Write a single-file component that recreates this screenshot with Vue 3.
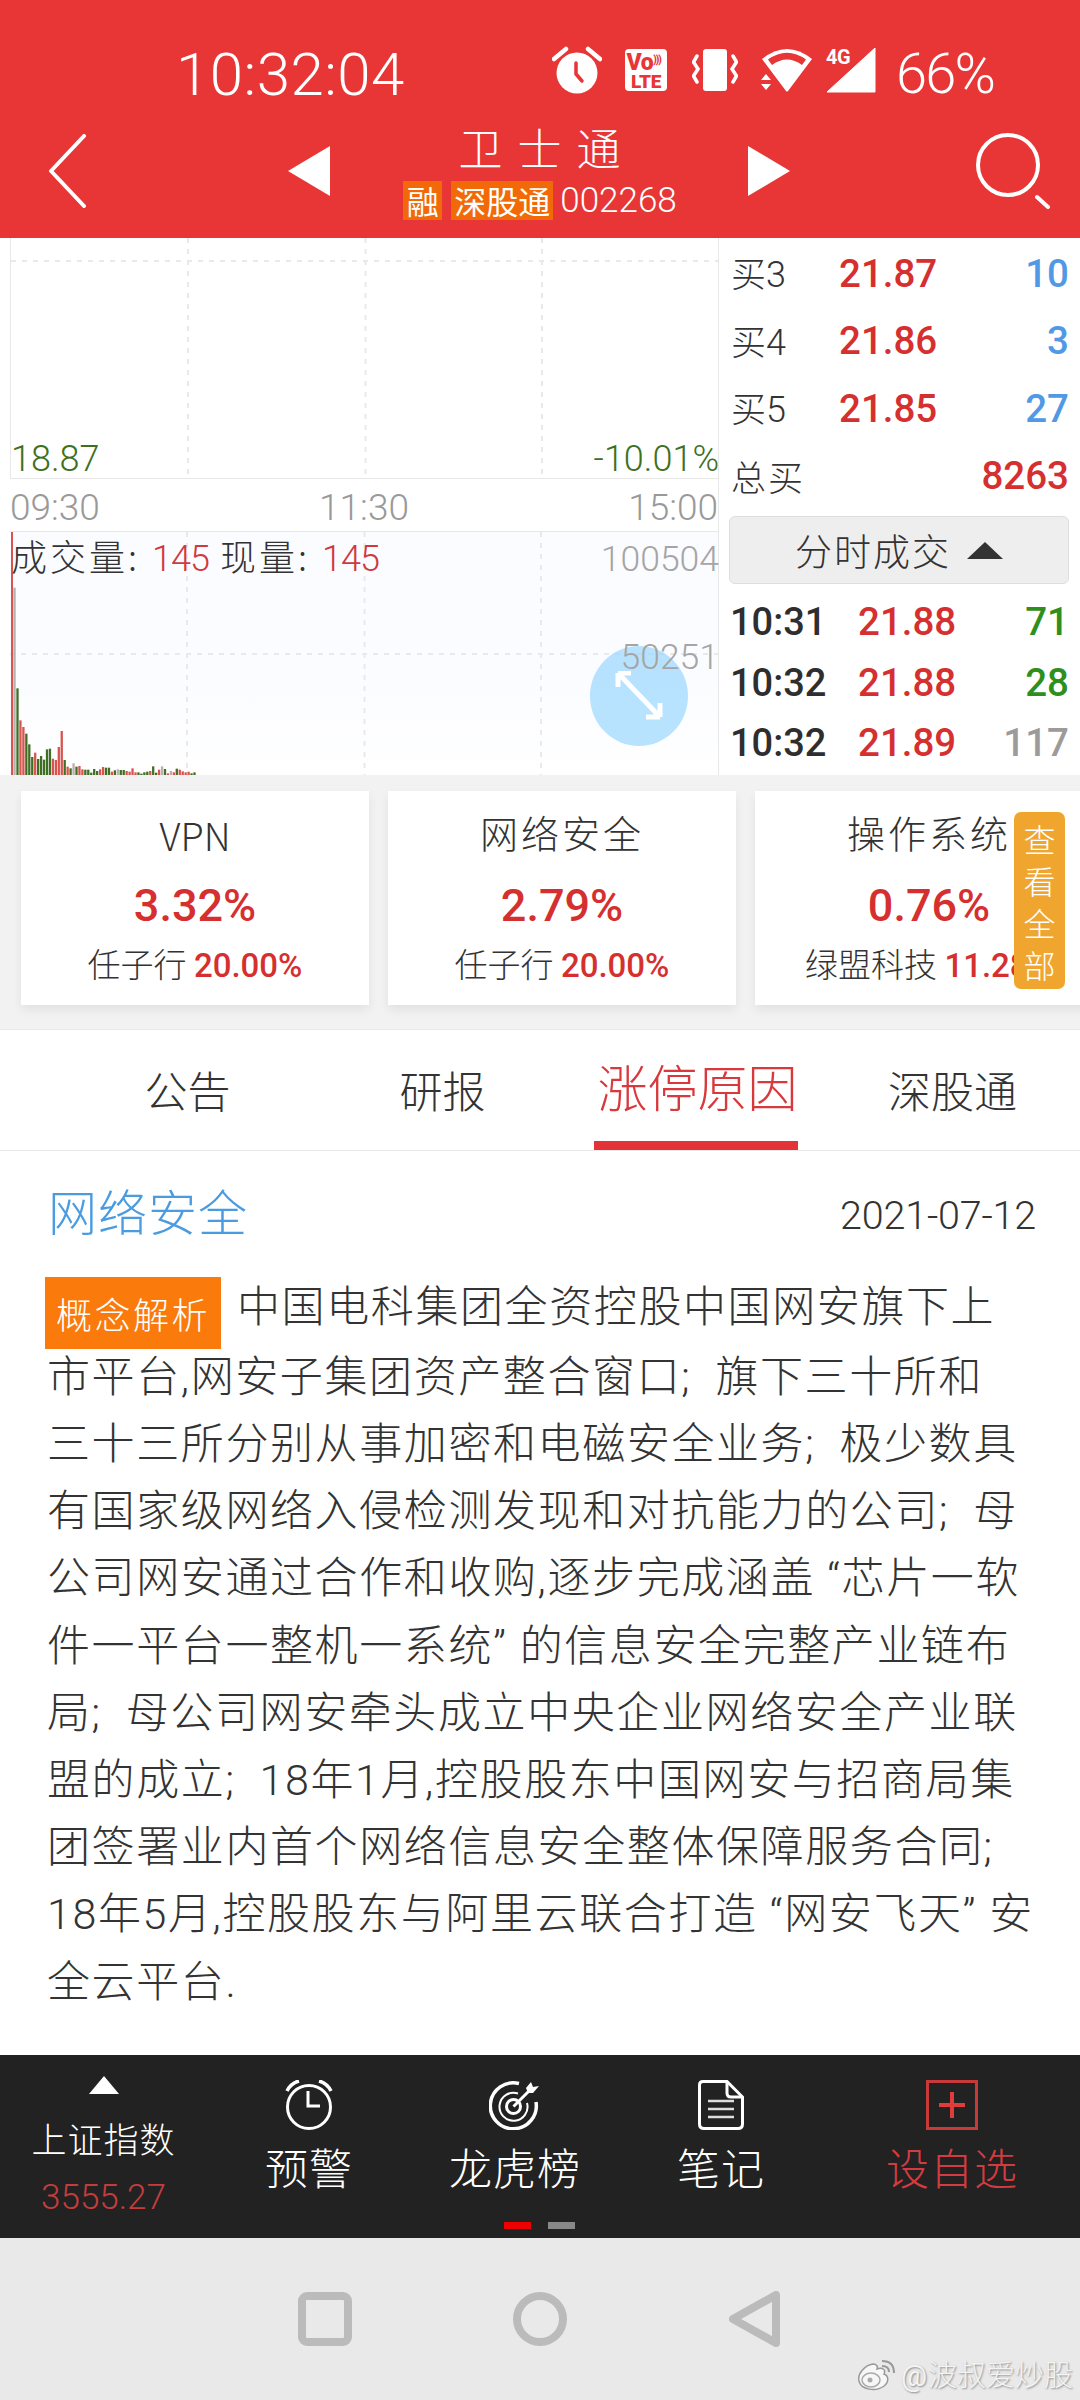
<script setup>
const tops = [170,472,568,588,608,640,678,665,684,675,686,655,653,683,687,648,600,687,707,712,697,707,705,715,716,716,725,714,720,715,708,710,710,722,718,715,717,717,720,722,712,724,724,728,724,722,720,706,725,716,706,714,727,720,724,713,716,721,724,722,727,724]
const kinds = 'xgrrgggrgggggrrrrgrgxgrrgggggrrggrgxggrrrrggggrggrxgrxrgrrrrgggx'
const colors = { g: '#3f6f25', r: '#d9544f', x: '#b6b0b0' }
const bars = tops.map((t, i) => ({
  x: 13.4 + i * 2.95,
  h: (735 - t) / 3,
  c: colors[kinds[i]] || '#3f6f25'
}))
const asks = [
  { l: '买', n: '3', p: '21.87', q: '10' },
  { l: '买', n: '4', p: '21.86', q: '3' },
  { l: '买', n: '5', p: '21.85', q: '27' }
]
const trades = [
  { t: '10:31', p: '21.88', q: '71', c: 'green' },
  { t: '10:32', p: '21.88', q: '28', c: 'green' },
  { t: '10:32', p: '21.89', q: '117', c: 'gray' }
]
const cards = [
  { t: 'VPN', p: '3.32%', s: '任子行', v: '20.00%', latin: true },
  { t: '网络安全', p: '2.79%', s: '任子行', v: '20.00%' },
  { t: '操作系统', p: '0.76%', s: '绿盟科技', v: '11.28%' }
]
const lines = [
  '市平台,网安子集团资产整合窗口;  旗下三十所和',
  '三十三所分别从事加密和电磁安全业务;  极少数具',
  '有国家级网络入侵检测发现和对抗能力的公司;  母',
  '公司网安通过合作和收购,逐步完成涵盖 “芯片一软',
  '件一平台一整机一系统” 的信息安全完整产业链布',
  '局;  母公司网安牵头成立中央企业网络安全产业联',
  '盟的成立;  18年1月,控股股东中国网安与招商局集',
  '团签署业内首个网络信息安全整体保障服务合同;',
  '18年5月,控股股东与阿里云联合打造 “网安飞天” 安',
  '全云平台.'
]
</script>

<template>
  <div class="page">
    <header class="head">
      <div class="status">
        <span class="clock">10:32:04</span>
        <div class="status-icons">
          <svg class="si" width="50" height="48" viewBox="0 0 50 48">
            <circle cx="25" cy="27" r="20.5" fill="#fff"/>
            <path d="M2 13 14 3M48 13 36 3" stroke="#fff" stroke-width="4.5" stroke-linecap="round"/>
            <path d="M24 17v11l6 7" fill="none" stroke="#e83535" stroke-width="3.5" stroke-linecap="round"/>
          </svg>
          <div class="volte"><span class="vo">Vo<i>)))</i></span><span class="lte">LTE</span></div>
          <svg class="si" width="46" height="42" viewBox="0 0 46 42">
            <rect x="11" y="0" width="24" height="42" rx="3" fill="#fff"/>
            <path d="M5 7 1.500 13 6 20 1.500 27 5 33M41 7 44.500 13 40 20 44.500 27 41 33" fill="none" stroke="#fff" stroke-width="3.500" stroke-linecap="round"/>
          </svg>
          <svg class="si wifi" width="52" height="46" viewBox="0 0 52 46">
            <path d="M1 12Q26-8 51 12L27 44Q26 45 25 44Z" fill="#fff"/>
            <path d="M7 12.500Q26-1 45 12.500L41 18Q26 7 11 18Z" fill="#e83535"/>
            <path d="M0 33 5 27 10 33ZM0 37 5 43 10 37Z" fill="#fff"/>
          </svg>
          <div class="signal">
            <span class="g4">4G</span>
            <svg width="50" height="46" viewBox="0 0 50 46"><path d="M49 1V45H1Z" fill="#fff" stroke="#fff" stroke-width="1" stroke-linejoin="round"/></svg>
          </div>
          <span class="batt">66%</span>
        </div>
      </div>
      <div class="nav">
        <svg class="back" width="40" height="74" viewBox="0 0 40 74"><path d="M36 2 3 37 36 72" fill="none" stroke="#fff" stroke-width="4" stroke-linecap="round" stroke-linejoin="round"/></svg>
        <svg class="tri-l" width="44" height="50" viewBox="0 0 44 50"><path d="M43 0V50L1 25Z" fill="#fff"/></svg>
        <div class="title-box">
          <div class="stock">卫士通</div>
          <div class="tags"><span class="tag one">融</span><span class="tag">深股通</span><span class="code">002268</span></div>
        </div>
        <svg class="tri-r" width="44" height="50" viewBox="0 0 44 50"><path d="M1 0V50L43 25Z" fill="#fff"/></svg>
        <svg class="search" width="76" height="76" viewBox="0 0 76 76">
          <circle cx="33" cy="32" r="30" fill="none" stroke="#fff" stroke-width="4"/>
          <path d="M62 64 73 74" stroke="#fff" stroke-width="4" stroke-linecap="round"/>
        </svg>
      </div>
    </header>

    <section class="quote">
      <div class="chart">
        <div class="plot-top">
          <svg class="grid" width="708" height="239" viewBox="0 0 708 239">
            <path d="M177 0V239M354.500 0V239M531 0V239" stroke="#e9e9e9" stroke-width="2" stroke-dasharray="5 6"/>
            <path d="M0 23H708" stroke="#e9e9e9" stroke-width="2" stroke-dasharray="5 6"/>
          </svg>
          <span class="low">18.87</span><span class="low">-10.01%</span>
        </div>
        <div class="times"><span>09:30</span><span>11:30</span><span>15:00</span></div>
        <div class="plot-vol">
          <svg class="grid" width="710" height="244" viewBox="0 0 710 244">
            <path d="M177 0V244M354.500 0V244M531 0V244" stroke="#e9e9e9" stroke-width="2" stroke-dasharray="5 6"/>
            <path d="M0 122H710" stroke="#e9e9e9" stroke-width="2" stroke-dasharray="5 6"/>
            <rect x="1" y="0" width="2" height="244" fill="#d9544f"/>
            <rect v-for="(b, i) in bars" :key="i" :x="b.x - 10" :y="244 - b.h" width="2.300" :height="b.h" :fill="b.c"/>
          </svg>
          <div class="vol-head">
            <span class="vol-text"><b>成交量:</b><em>145</em><b class="b2">现量:</b><em>145</em></span>
            <span class="vol-max">100504</span>
          </div>
          <div class="expand">
            <svg width="50" height="50" viewBox="0 0 50 50">
              <path d="M4 2 46 46M4 2H17M4 2V16M46 46H32M46 46V32" fill="none" stroke="#fff" stroke-width="5"/>
            </svg>
          </div>
          <span class="vol-mid">50251</span>
        </div>
      </div>
      <aside class="book">
        <div v-for="a in asks" :key="a.n" class="row">
          <span class="lab">{{ a.l }}<span class="lab-n">{{ a.n }}</span></span>
          <span class="price">{{ a.p }}</span>
          <span class="qty blue">{{ a.q }}</span>
        </div>
        <div class="row">
          <span class="lab total">总买</span>
          <span class="qty red">8263</span>
        </div>
        <div class="fold">分时成交<i class="fold-tri"></i></div>
        <div v-for="(t, i) in trades" :key="i" class="trade">
          <span class="t-time">{{ t.t }}</span>
          <span class="t-price">{{ t.p }}</span>
          <span class="qty" :class="t.c">{{ t.q }}</span>
        </div>
      </aside>
    </section>

    <section class="cards">
      <div class="card-row">
        <div v-for="c in cards" :key="c.t" class="card">
          <div class="c-title" :class="{ latin: c.latin }">{{ c.t }}</div>
          <div class="c-pct">{{ c.p }}</div>
          <div class="c-sub">{{ c.s }} <em>{{ c.v }}</em></div>
        </div>
      </div>
      <div class="all">查看全部</div>
    </section>

    <nav class="tabs">
      <span class="tab">公告</span>
      <span class="tab">研报</span>
      <span class="tab on">涨停原因</span>
      <span class="tab">深股通</span>
    </nav>

    <article class="article">
      <div class="a-head"><span class="a-title">网络安全</span><span class="a-date">2021-07-12</span></div>
      <div class="a-first"><span class="a-tag">概念解析</span><span class="a-line">中国电科集团全资控股中国网安旗下上</span></div>
      <div v-for="l in lines" :key="l" class="a-line">{{ l }}</div>
    </article>

    <div class="spacer"></div>

    <footer class="bar">
      <div class="index">
        <i class="idx-tri"></i>
        <span class="idx-name">上证指数</span>
        <span class="idx-val">3555.27</span>
      </div>
      <div class="act a1">
        <svg width="50" height="50" viewBox="0 0 50 50" fill="none" stroke="#fff" stroke-width="3">
          <circle cx="25" cy="27" r="21.500"/>
          <path d="M24 11V26H36"/>
          <path d="M3 11Q7 3 15 1M47 11Q43 3 35 1" stroke-width="3.500"/>
        </svg>
        <span>预警</span>
      </div>
      <div class="act a2">
        <svg width="52" height="50" viewBox="0 0 52 50" fill="none" stroke="#fff">
          <path d="M30 3.500A23 23 0 1 0 47 22" stroke-width="3.500"/>
          <path d="M29 13.500A14 14 0 1 0 38 23" stroke-width="2"/>
          <circle cx="24.500" cy="26.500" r="7" stroke-width="3"/>
          <path d="M24.500 26.500 42 9" stroke-width="3"/>
          <path d="M37 8 42 2 44 7 50 6 44 13 39 13Z" fill="#fff" stroke="none"/>
        </svg>
        <span>龙虎榜</span>
      </div>
      <div class="act a3">
        <svg width="46" height="50" viewBox="0 0 46 50" fill="none" stroke="#fff" stroke-width="3">
          <path d="M5 1.500H29L44.500 17V44Q44.500 48.500 40 48.500H6Q1.500 48.500 1.500 44V5Q1.500 1.500 5 1.500Z"/>
          <path d="M29 1.500V13Q29 17 33 17H44.500"/>
          <path d="M10 21H36M10 29H36M10 37H36" stroke="#ddd" stroke-width="2.500"/>
        </svg>
        <span>笔记</span>
      </div>
      <div class="act a4">
        <svg width="52" height="50" viewBox="0 0 52 50" fill="none" stroke="#c83a3a" stroke-width="3">
          <rect x="1.500" y="1.500" width="49" height="47"/>
          <path d="M26 12V38M13 25H39" stroke="#e03c3c" stroke-width="4"/>
        </svg>
        <span>设自选</span>
      </div>
      <div class="pager"><i class="p-on"></i><i class="p-off"></i></div>
    </footer>

    <div class="sys">
      <span class="sq"></span>
      <span class="ci"></span>
      <svg width="52" height="56" viewBox="0 0 52 56"><path d="M47 4V52L4 28Z" fill="none" stroke="#bbb" stroke-width="8" stroke-linejoin="round"/></svg>
      <div class="mark">
        <svg width="40" height="32" viewBox="0 0 40 32">
          <path d="M3 22C1 15 9 6 17 5 21 5 22 8 21 10 27 8 30 11 28 15 33 17 33 23 28 27 20 33 5 31 3 22Z" fill="#f7f7f7" stroke="#999" stroke-width="1.500"/>
          <ellipse cx="15" cy="21" rx="9" ry="7" fill="none" stroke="#aaa" stroke-width="1.500"/>
          <circle cx="14" cy="21" r="2.500" fill="#aaa"/>
          <path d="M26 2Q38 2 38 14M26 7Q33 7 33 13" fill="none" stroke="#999" stroke-width="2"/>
        </svg>
        <span><em class="at">@</em>波叔爱炒股</span>
      </div>
    </div>
  </div>
</template>

<style>
html, body { margin: 0; background: #fff; }
</style>

<style scoped>
.page {
  width: 1080px;
  height: 2400px;
  display: flex;
  flex-direction: column;
  overflow: hidden;
  font-family: "Noto Sans CJK SC", Roboto, sans-serif;
  font-weight: 300;
  color: #333;
  background: #fff;
}
em, i, b { font-style: normal; font-weight: inherit; }
.head { height: 238px; background: #e83535; color: #fff; flex: none; }
.status { height: 100px; display: flex; align-items: flex-start; padding: 48px 0 0 176px; box-sizing: border-box; }
.clock { font: 300 60px/54px Roboto, sans-serif; letter-spacing: 0.500px; width: 376px; flex: none; }
.status-icons { display: flex; align-items: center; height: 47px; margin-top: -2px; }
.si { flex: none; margin-right: 23px; }
.volte { width: 42px; height: 42px; margin-right: 25px; background: #fff; border-radius: 4px; color: #e83535; font: 900 15px/18px Roboto, sans-serif; display: flex; flex-direction: column; align-items: center; justify-content: center; flex: none; }
.vo { font-size: 23px; line-height: 21px; letter-spacing: -0.500px; width: 39px; white-space: nowrap; }
.vo i { font-size: 10px; vertical-align: 7px; letter-spacing: -1px; }
.lte { font-size: 19px; line-height: 17px; letter-spacing: -0.300px; }
.wifi { margin-right: 13px; }
.signal { position: relative; width: 50px; margin-right: 20px; height: 46px; flex: none; }
.signal svg { display: block; }
.g4 { position: absolute; left: 0; top: 1px; font: 700 20px/18px Roboto, sans-serif; letter-spacing: -0.500px; }
.batt { font: 300 56px/54px Roboto, sans-serif; letter-spacing: -1.800px; margin-top: 8px; }
.nav { height: 138px; position: relative; display: flex; align-items: flex-start; }
.back { position: absolute; left: 48px; top: 34px; }
.tri-l { position: absolute; left: 287px; top: 46px; }
.tri-r { position: absolute; left: 747px; top: 46px; }
.search { position: absolute; left: 975px; top: 33px; }
.title-box { width: 100%; display: flex; flex-direction: column; align-items: center; }
.stock { font: 300 44px/50px "Noto Sans CJK SC", sans-serif; letter-spacing: 15px; margin: 22px 0 0 14px; height: 50px; }
.tags { display: flex; align-items: center; margin: 9px 0 0 0; height: 39px; }
.tag { background: #f26a08; height: 39px; font: 400 32px/38px "Noto Sans CJK SC", sans-serif; padding: 0 3px; margin-right: 9px; }
.tag.one { padding: 0 3.500px; }
.code { font: 300 35px/41px Roboto, sans-serif; margin-left: -2px; }

.quote { height: 537px; display: flex; flex: none; }
.chart { width: 719px; padding-left: 10px; box-sizing: border-box; border-right: 1px solid #e8e8e8; display: flex; flex-direction: column; flex: none; }
.plot-top { height: 241px; border-left: 1px solid #e8e8e8; border-bottom: 1px solid #e8e8e8; box-sizing: border-box; position: relative; display: flex; justify-content: space-between; align-items: flex-end; }
.grid { position: absolute; left: 0; top: 0; }
.low { position: relative; font: 300 36px/46px Roboto, sans-serif; color: #3d7021; margin: 0 -1px -4px 0; }
.times { height: 52px; display: flex; justify-content: space-between; font: 300 37px/57px Roboto, sans-serif; color: #999; }
.plot-vol { height: 244px; position: relative; border-top: 1px solid #e8e8e8; box-sizing: border-box; background: linear-gradient(#fbfcff 0, #fbfcff 60%, #fff 100%); }
.vol-head { position: relative; display: flex; justify-content: space-between; align-items: center; height: 50px; }
.vol-text { font: 300 36px/50px "Noto Sans CJK SC", Roboto, sans-serif; color: #333; letter-spacing: 3px; white-space: nowrap; display: flex; align-items: baseline; margin: -1px 0 0 1px; }
.vol-text em { color: #d0393e; font: 300 36px/50px Roboto, sans-serif; letter-spacing: -1px; margin-left: 12px; }
.vol-text .b2 { margin-left: 11px; }
.vol-max, .vol-mid { font: 300 35.500px/44px Roboto, sans-serif; color: #a5a5a5; margin-right: -1px; }
.vol-max { margin-top: 4px; }
.vol-mid { position: absolute; right: 0; top: 103px; }
.expand { position: absolute; left: 580px; top: 114px; width: 98px; height: 100px; border-radius: 50%; background: rgba(150, 213, 255, .68); display: flex; align-items: center; justify-content: center; }

.book { flex: 1; padding: 2px 11px 0 10px; display: flex; flex-direction: column; position: relative; }
.row { height: 67.500px; display: flex; align-items: center; flex: none; }
.lab { width: 110px; padding-left: 2px; box-sizing: border-box; font: 300 35px/40px "Noto Sans CJK SC", sans-serif; flex: none; }
.lab-n { font: 300 36px/40px Roboto, sans-serif; }
.total { width: auto; letter-spacing: 2px; margin-right: auto; }
.price { font: 500 38.500px/40px Roboto, sans-serif; color: #d5302f; }
.qty { margin-left: auto; font: 500 38.500px/40px Roboto, sans-serif; text-align: right; }
.blue { color: #5199e4; }
.red { color: #d5302f; }
.green { color: #2f8f1d; }
.gray { color: #9b9b9b; }
.fold { height: 68px; margin-top: 6px; flex: none; background: #eee; border: 1px solid #dedede; border-radius: 6px; box-sizing: border-box; font: 300 37px/64px "Noto Sans CJK SC", sans-serif; letter-spacing: 2px; display: flex; align-items: center; justify-content: center; }
.fold-tri { width: 0; height: 0; border: 18px solid transparent; border-top: 0; border-bottom: 17px solid #333; margin-left: 16px; }
.fold + .trade { margin-top: 8px; }
.trade { height: 60.500px; display: flex; align-items: center; flex: none; }
.t-time { font: 500 38px/40px Roboto, sans-serif; color: #2e2e2e; width: 129px; padding-left: 1px; box-sizing: border-box; flex: none; }
.t-price { font: 500 38.500px/40px Roboto, sans-serif; color: #d5302f; }

.cards { height: 254px; background: #f2f2f2; position: relative; overflow: hidden; flex: none; padding: 16px 0 0 21px; box-sizing: border-box; }
.card-row { display: flex; gap: 19px; width: 1100px; }
.card { width: 348px; height: 214px; flex: none; background: #fff; box-shadow: 0 5px 10px rgba(0, 0, 0, .07); display: flex; flex-direction: column; align-items: center; white-space: nowrap; }
.c-title { font: 300 38px/50px "Noto Sans CJK SC", Roboto, sans-serif; margin-top: 16px; letter-spacing: 3px; }
.c-title.latin { letter-spacing: 0; padding-top: 3px; margin-bottom: -3px; }
.c-pct { font: 500 45px/50px Roboto, sans-serif; color: #d5302f; margin-top: 24px; }
.c-sub { font: 300 33px/44px "Noto Sans CJK SC", Roboto, sans-serif; margin-top: 10px; }
.c-sub em { font: 500 33px/44px Roboto, sans-serif; color: #d5302f; }
.all { position: absolute; left: 1014px; top: 37px; width: 51px; height: 177px; background: #f0a52f; border-radius: 7px; color: #fff; font: 300 32px/42px "Noto Sans CJK SC", sans-serif; text-align: center; padding-top: 5px; box-sizing: border-box; }

.tabs { height: 122px; flex: none; box-sizing: border-box; border-top: 1px solid #e8e8e8; border-bottom: 1px solid #e8e8e8; display: grid; grid-template-columns: 255px 255px 255px 255px; padding-left: 60px; background: #fff; }
.tab { text-align: center; font: 300 43px/118px "Noto Sans CJK SC", sans-serif; position: relative; }
.tab.on { color: #d9383c; font-size: 50px; line-height: 110px; }
.tab.on::after { content: ""; position: absolute; left: 24px; width: 204px; bottom: 0; height: 9px; background: #e33339; }

.article { padding: 0 0 0 47px; flex: none; }
.a-head { display: flex; justify-content: space-between; align-items: center; padding: 24px 44px 0 1px; height: 66px; }
.a-title { font: 300 49px/70px "Noto Sans CJK SC", sans-serif; color: #4a9be0; letter-spacing: 1px; padding-top: 3px; }
.a-date { font: 300 39.500px/66px Roboto, sans-serif; color: #333; padding-top: 16px; letter-spacing: -0.200px; }
.a-first { display: flex; align-items: center; height: 67.200px; margin: 32.500px 0 3px; }
.a-tag { background: #fa7a0c; color: #fff; font: 300 36px/72px "Noto Sans CJK SC", sans-serif; height: 72px; padding: 0 9px 0 11px; margin: 11px 16px 0 -2px; letter-spacing: 2.500px; flex: none; white-space: nowrap; box-sizing: border-box; width: 176px; }
.a-line { font: 300 43px/67.200px Roboto, "Noto Sans CJK SC", sans-serif; letter-spacing: 1.600px; white-space: pre; }
.spacer { flex: 1; background: #fff; }

.bar { height: 183px; flex: none; background: #222; position: relative; color: #fff; display: flex; align-items: flex-start; }
.index { width: 207px; flex: none; display: flex; flex-direction: column; align-items: center; }
.idx-tri { width: 0; height: 0; border: 15px solid transparent; border-top: 0; border-bottom: 18px solid #fff; margin-top: 21px; }
.idx-name { font: 300 35px/44px "Noto Sans CJK SC", sans-serif; margin-top: 22px; letter-spacing: 1px; }
.idx-val { font: 300 35px/40px Roboto, sans-serif; color: #c33d3d; margin-top: 18px; }
.act { position: absolute; top: 25px; display: flex; flex-direction: column; align-items: center; width: 180px; margin-left: -90px; }
.act svg { display: block; }
.act span { font: 300 43px/50px "Noto Sans CJK SC", sans-serif; margin-top: 11px; letter-spacing: 1px; }
.a1 { left: 309px; }
.a2 { left: 515px; }
.a3 { left: 721px; }
.a4 { left: 952px; }
.a4 span { color: #d23c40; }
.pager { position: absolute; left: 504px; top: 167px; display: flex; gap: 17px; }
.pager i { width: 27px; height: 7px; display: block; }
.p-on { background: #e00; }
.p-off { background: #888; }

.sys { height: 162px; flex: none; background: #e9e9e9; position: relative; display: flex; align-items: flex-start; padding-top: 54px; box-sizing: border-box; }
.sq { margin-left: 298px; width: 54px; height: 54px; border: 8px solid #bbb; border-radius: 9px; box-sizing: border-box; flex: none; }
.ci { margin-left: 161px; width: 54px; height: 54px; border: 8px solid #bbb; border-radius: 50%; box-sizing: border-box; flex: none; }
.sys > svg { margin: -1px 0 0 162px; flex: none; }
.mark { position: absolute; left: 856px; top: 116px; display: flex; align-items: center; gap: 5px; }
.mark span { font: 300 29px/38px "Noto Sans CJK SC", sans-serif; color: #f4f4f4; text-shadow: 1px 1px 2px #888; white-space: nowrap; }
.at { font: 400 29px/38px Roboto, sans-serif; margin-right: 1px; }
</style>
